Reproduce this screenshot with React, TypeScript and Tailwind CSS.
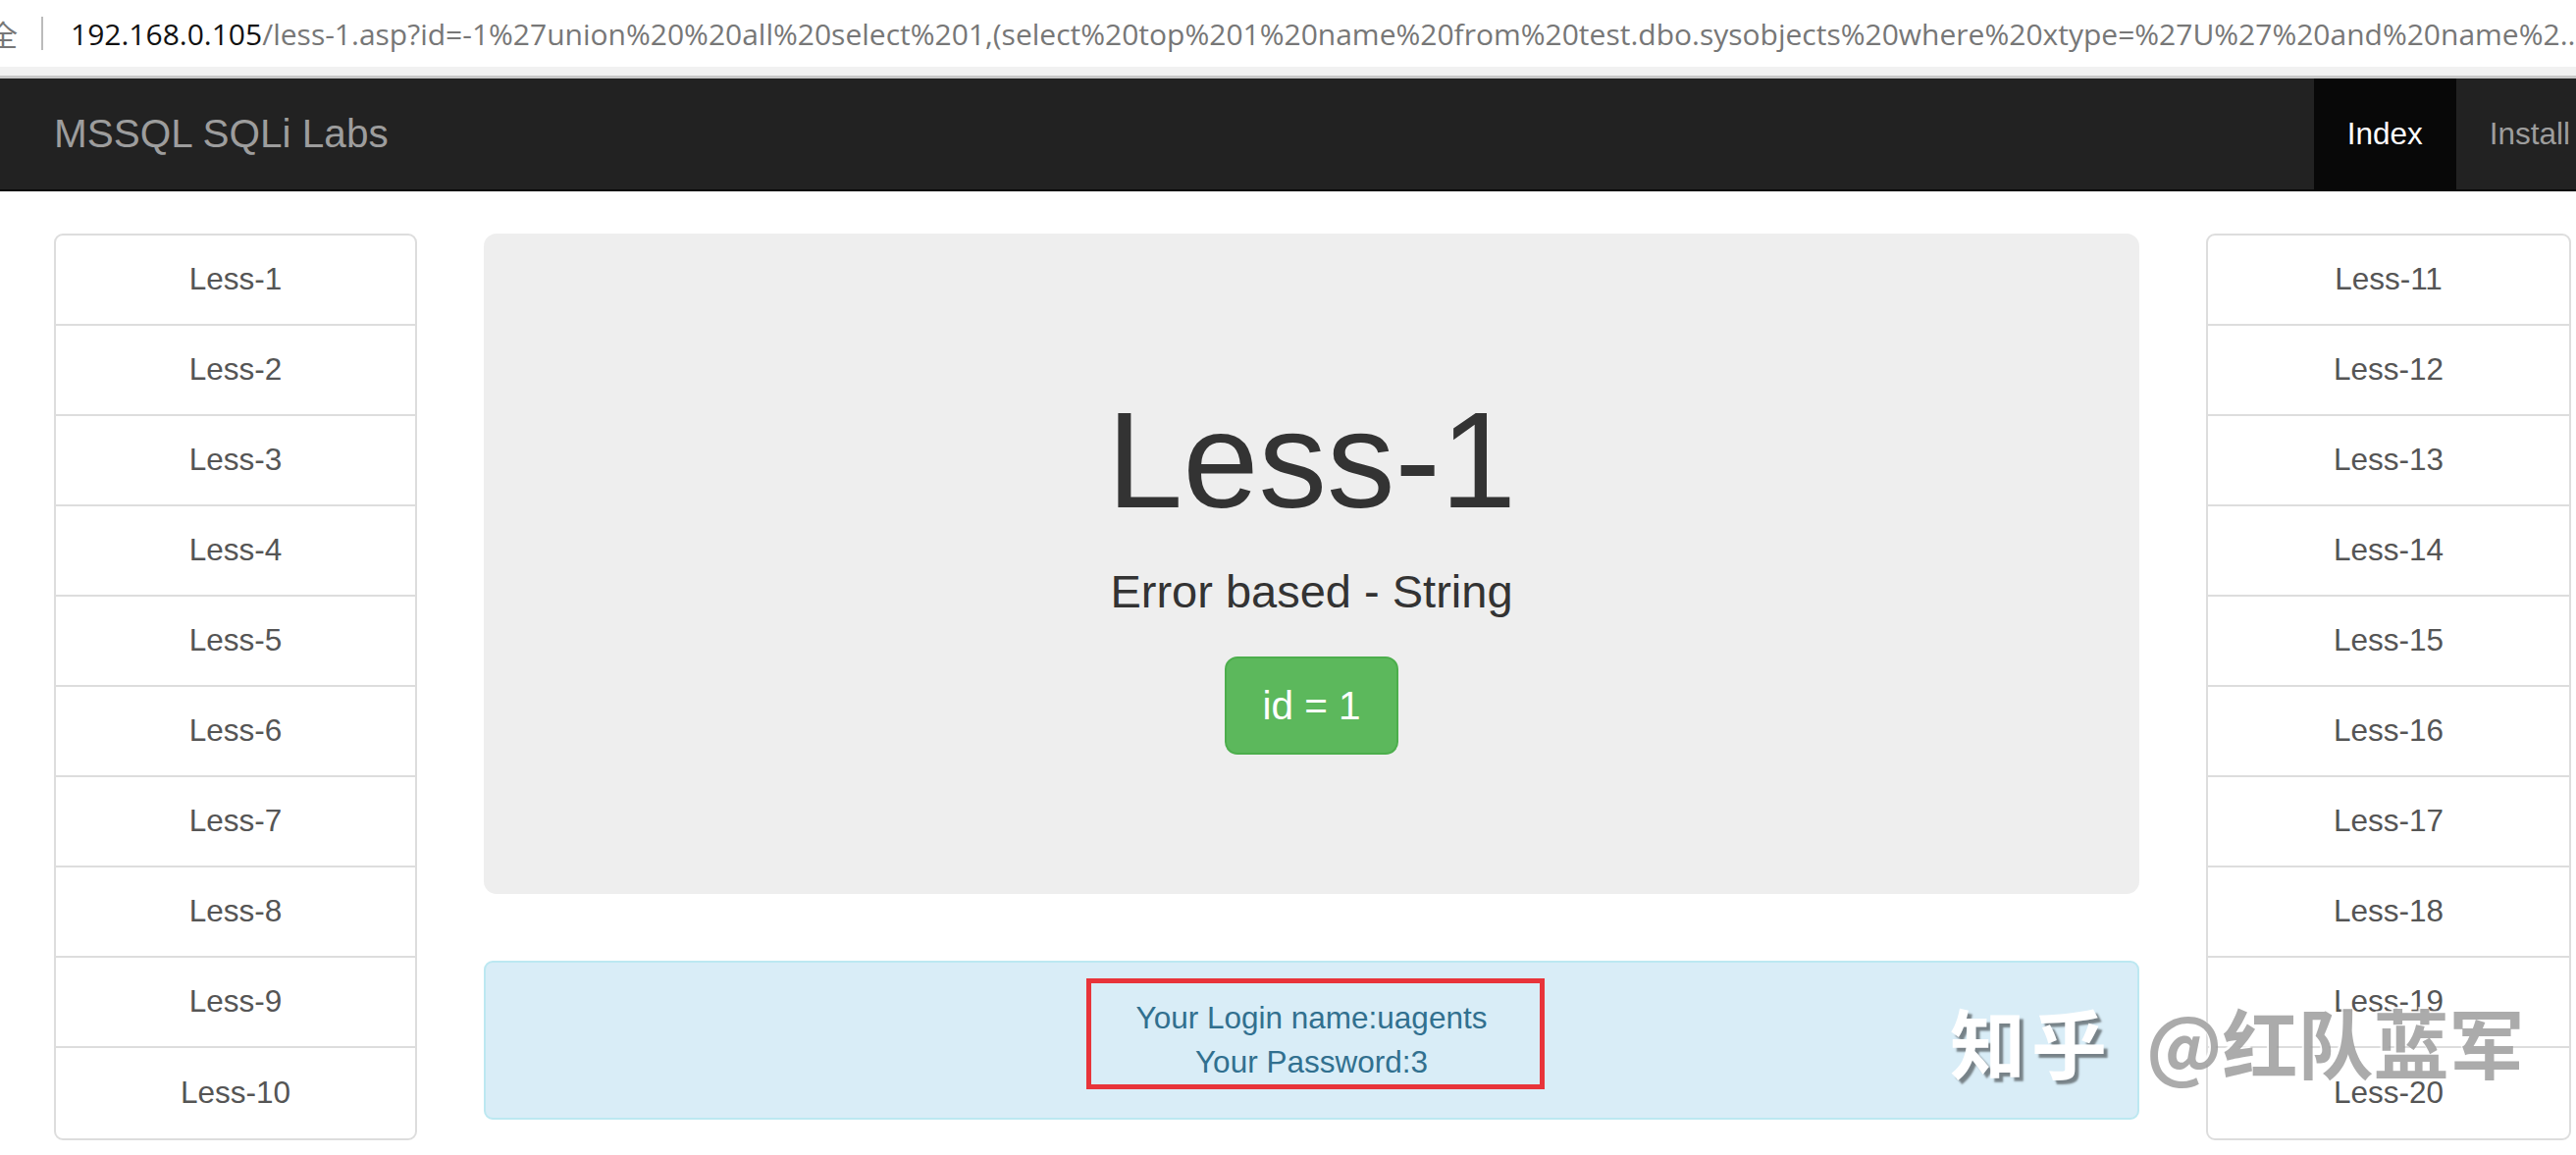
const LEFT = ['Less-1', 'Less-2', 'Less-3', 'Less-4', 'Less-5', 'Less-6', 'Less-7', 'Less-8', 'Less-9', 'Less-10'];
const RIGHT = ['Less-11', 'Less-12', 'Less-13', 'Less-14', 'Less-15', 'Less-16', 'Less-17', 'Less-18', 'Less-19', 'Less-20'];

const URL_REST =
  "/less-1.asp?id=-1%27union%20%20all%20select%201,(select%20top%201%20name%20from%20test.dbo.sysobjects%20where%20xtype=%27U%27%20and%20name%2..";

function LessList({ items, width }: { items: string[]; width: string }) {
  return (
    <ul className={`${width} shrink-0 self-start rounded-[9px] border-2 border-[#ddd] bg-white divide-y-2 divide-[#ddd]`}>
      {items.map((item) => (
        <li key={item} className="h-[92px] flex items-center justify-center text-[31.5px] text-[#555]">
          {item}
        </li>
      ))}
    </ul>
  );
}

export default function App() {
  return (
    <div className="relative h-[1177px] w-full overflow-hidden bg-white font-['Liberation_Sans',Arial,sans-serif]">
      {/* browser address bar */}
      <div className="h-[68px] flex items-center bg-white font-['Open_Sans',sans-serif] whitespace-nowrap overflow-hidden">
        <span className="-ml-[12px] text-[30px] text-[#777] font-['Noto_Sans_CJK_SC',sans-serif]">全</span>
        <span className="ml-[24px] h-[34px] w-[2px] bg-[#bbb]" />
        <span className="ml-[28px] text-[30px]">
          <span className="text-[#111]">192.168.0.105</span>
          <span className="text-[#777]">{URL_REST}</span>
        </span>
      </div>
      <div className="h-[9px] bg-[#f1f1f1]" />
      <div className="h-[3px] bg-[#c8c8c8]" />

      {/* navbar */}
      <header className="h-[115px] flex items-stretch bg-[#222] border-b-2 border-[#080808] overflow-hidden">
        <div className="pl-[55px] flex items-center text-[40.5px] text-[#9d9d9d]">MSSQL SQLi Labs</div>
        <nav className="ml-auto -mr-[28px] flex items-stretch text-[31.5px]">
          <a className="px-[34px] flex items-center bg-[#080808] text-white">Index</a>
          <a className="px-[34px] flex items-center text-[#9d9d9d]">Install</a>
        </nav>
      </header>

      {/* content */}
      <main className="flex gap-[68px] pt-[43px] pl-[55px] pr-[5px]">
        <LessList items={LEFT} width="w-[370px]" />

        <section className="flex-1 flex flex-col">
          <div className="rounded-[13px] bg-[#eee] text-center text-[#333] pt-[153px] pb-[142px]">
            <h1 className="text-[139px] leading-[156px] mb-[22px]">Less-1</h1>
            <p className="text-[47px] leading-[67px] mb-[33px]">Error based - String</p>
            <button className="h-[100px] px-[36px] rounded-[13px] border-2 border-[#4cae4c] bg-[#5cb85c] text-[40.5px] text-white">
              id = 1
            </button>
          </div>

          <div className="relative mt-[68px] rounded-[9px] border-2 border-[#bce8f1] bg-[#d9edf7] py-[34px] text-center text-[31.5px] leading-[45px] text-[#31708f]">
            <div>Your Login name:uagents</div>
            <div>Your Password:3</div>
            <div className="absolute left-[612px] top-[16px] w-[467px] h-[113px] border-[5px] border-[#e8343a]" />
          </div>
        </section>

        <LessList items={RIGHT} width="w-[372px]" />
      </main>

      {/* watermark */}
      <div className="absolute left-[1987px] top-[1022px] flex items-center gap-[34px] font-semibold text-[77px] leading-none font-['Noto_Sans_CJK_SC',sans-serif] pointer-events-none">
        <span className="text-white tracking-[6px] [text-shadow:4px_4px_2px_rgba(0,0,0,0.45)]">知乎</span>
        <span className="text-[rgba(150,150,150,0.8)] [text-shadow:-2px_-2px_1px_rgba(255,255,255,0.9)]">@红队蓝军</span>
      </div>
    </div>
  );
}
